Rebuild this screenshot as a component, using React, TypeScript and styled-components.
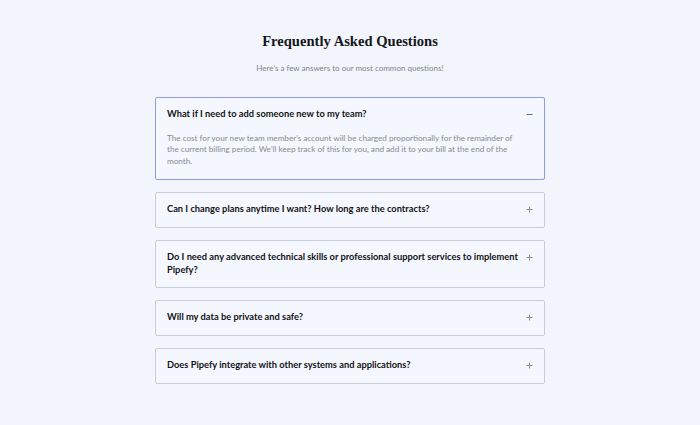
import React, { useState } from "react";
import styled, { createGlobalStyle } from "styled-components";

const Global = createGlobalStyle`
  html, body { margin: 0; padding: 0; background: #f3f5fd; }
  body { font-family: Lato, "Open Sans", sans-serif; }
`;

const Page = styled.div`
  width: 700px;
  height: 425px;
  background: #f3f5fd;
  display: flex;
  flex-direction: column;
  align-items: center;
  box-sizing: border-box;
  padding-top: 30px;
`;

const Title = styled.h1`
  margin: 0;
  font-family: "Liberation Serif", "DejaVu Serif", serif;
  font-weight: 700;
  font-size: 14.6px;
  line-height: 22px;
  color: #15161a;
`;

const Subtitle = styled.p`
  margin: 10px 0 0;
  font-size: 8px;
  line-height: 12px;
  color: #7d8293;
`;

const List = styled.div`
  margin-top: 23px;
  width: 390px;
  display: flex;
  flex-direction: column;
  gap: 12px;
`;

const Card = styled.div<{ $open: boolean }>`
  border: 1px solid ${(p) => (p.$open ? "#939be0" : "#c9ccd6")};
  border-radius: 2px;
  background: #f5f7fe;
  padding: ${(p) => (p.$open ? "10px 10px 12px 11px" : "10px 10px 11px 11px")};
`;

const Head = styled.button`
  all: unset;
  display: flex;
  align-items: flex-start;
  justify-content: space-between;
  width: 100%;
  cursor: pointer;
`;

const Question = styled.span`
  font-family: Lato, sans-serif;
  font-weight: 700;
  font-size: 9.3px;
  line-height: 12.5px;
  color: #111216;
  max-width: 356px;
`;

const Toggle = styled.span`
  width: 10px;
  height: 13px;
  display: flex;
  align-items: center;
  justify-content: center;
  flex-shrink: 0;
`;

const Answer = styled.p`
  margin: 11.5px 0 0;
  max-width: 348px;
  font-size: 8.15px;
  line-height: 11.5px;
  color: #848999;
`;

const items = [
  {
    q: "What if I need to add someone new to my team?",
    a: "The cost for your new team member’s account will be charged proportionally for the remainder of the current billing period. We’ll keep track of this for you, and add it to your bill at the end of the month.",
  },
  { q: "Can I change plans anytime I want? How long are the contracts?", a: "" },
  {
    q: "Do I need any advanced technical skills or professional support services to implement Pipefy?",
    a: "",
  },
  { q: "Will my data be private and safe?", a: "" },
  { q: "Does Pipefy integrate with other systems and applications?", a: "" },
];

const Icon = ({ open }: { open: boolean }) => (
  <svg width="7" height="7" viewBox="0 0 7 7">
    <rect x="0.5" y="3" width="6" height="1" fill={open ? "#5a66c8" : "#8a8f9c"} />
    {!open && <rect x="3" y="0.5" width="1" height="6" fill="#8a8f9c" />}
  </svg>
);

export default function App() {
  const [open, setOpen] = useState(0);
  return (
    <>
      <Global />
      <Page>
        <Title>Frequently Asked Questions</Title>
        <Subtitle>Here’s a few answers to our most common questions!</Subtitle>
        <List>
          {items.map((it, i) => (
            <Card key={i} $open={open === i}>
              <Head onClick={() => setOpen(open === i ? -1 : i)}>
                <Question>{it.q}</Question>
                <Toggle>
                  <Icon open={open === i} />
                </Toggle>
              </Head>
              {open === i && it.a && <Answer>{it.a}</Answer>}
            </Card>
          ))}
        </List>
      </Page>
    </>
  );
}
